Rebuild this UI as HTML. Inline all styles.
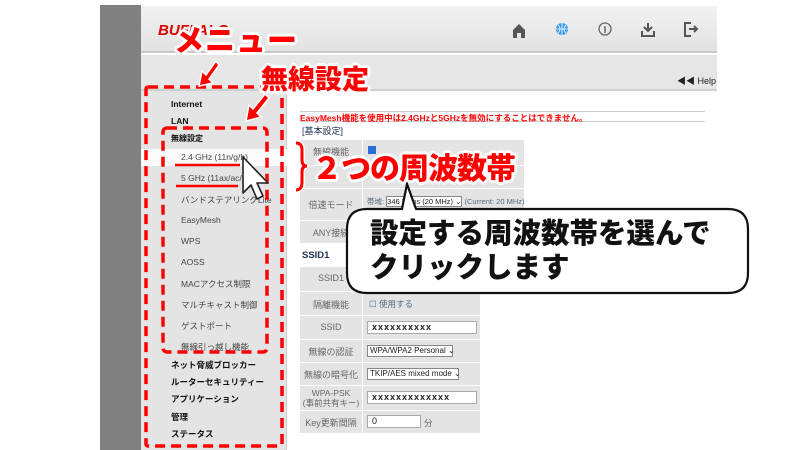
<!DOCTYPE html>
<html><head><meta charset="utf-8">
<style>
*{margin:0;padding:0;box-sizing:border-box}
body{width:800px;height:450px;overflow:hidden;background:#fff;font-family:"Liberation Sans","Noto Sans CJK JP",sans-serif;position:relative}
.a{position:absolute}
.strip{left:100px;top:5px;width:41px;height:445px;background:#808080}
.hdr{left:141px;top:6px;width:576px;height:47px;background:linear-gradient(#f2f2f2,#e2e2e2);border-bottom:2px solid #c8c8c8}
.sub{left:141px;top:55px;width:576px;height:36px;background:#e6e6e6;border-bottom:2px solid #d0d0d0}
.side{left:141px;top:91px;width:146px;height:359px;background:#e4e4e4;border-right:1px solid #ccc}
.side div{position:absolute;font-size:8.5px;color:#333;white-space:nowrap}
.side .b{font-weight:bold;color:#111;left:30px}
.side .s{left:40px;color:#444}
.tb{background:#e4e4e4}
.lab{position:absolute;font-size:9px;color:#666;text-align:center}
.row{position:absolute;left:300px;height:1px;background:#fff}
.ann{font-weight:900;color:#f00;font-family:"Noto Sans CJK JP",sans-serif;text-shadow:0 0 3px #fff,0 0 3px #fff,2px 2px 0 #fff,-2px -2px 0 #fff,2px -2px 0 #fff,-2px 2px 0 #fff,0 3px 0 #fff,0 -3px 0 #fff,3px 0 0 #fff,-3px 0 0 #fff}
.inp{position:absolute;background:#fff;border:1px solid #aaa;font-size:9px;padding-left:4px;letter-spacing:1px;color:#222;font-weight:bold}
.sel{position:absolute;background:#fff;border:1px solid #888;font-size:8px;color:#222;padding-left:2px;white-space:nowrap;line-height:10px}
</style></head><body>
<div class="a strip"></div>
<div class="a hdr"></div>
<div class="a" style="left:158px;top:22px;font-size:15px;font-weight:900;font-style:italic;color:#d00">BUFFALO</div>
<svg class="a" style="left:505px;top:18px" width="220" height="24">
<path d="M8 12 L14 6 L20 12 V20 H16 V15 H12 V20 H8Z" fill="#555"/>
<circle cx="57" cy="11" r="6" fill="#3b9be8"/><path d="M51 11H63M57 5V17M53 7Q57 11 53 15M61 7Q57 11 61 15" stroke="#fff" stroke-width=".8" fill="none"/>
<circle cx="100" cy="11" r="6" fill="none" stroke="#666" stroke-width="1.3"/><path d="M100 8V15" stroke="#666" stroke-width="1.5"/>
<path d="M143 5V12M139 9L143 13L147 9M137 13V18H149V13" stroke="#555" stroke-width="2" fill="none"/>
<path d="M186 5H180V18H186M184 11H192M189 8L192 11L189 14" stroke="#555" stroke-width="2" fill="none"/>
</svg>
<div class="a sub"></div>
<div class="a" style="left:677px;top:74px;font-size:9px;color:#222">◀◀ Help</div>
<div class="a side">
<div class="b" style="top:8px">Internet</div>
<div class="b" style="top:25px">LAN</div>
<div class="b" style="top:42px;font-size:8px">無線設定</div>
<div style="left:0;top:58px;width:146px;height:17px;background:#fafafa"></div>
<div class="s" style="top:61px">2.4 GHz (11n/g/b)</div>
<div class="s" style="top:82px">5 GHz (11ax/ac/n/a)</div>
<div class="s" style="top:103px">バンドステアリングLite</div>
<div class="s" style="top:124px">EasyMesh</div>
<div class="s" style="top:145px">WPS</div>
<div class="s" style="top:166px">AOSS</div>
<div class="s" style="top:187px">MACアクセス制限</div>
<div class="s" style="top:208px">マルチキャスト制御</div>
<div class="s" style="top:229px">ゲストポート</div>
<div class="s" style="top:250px">無線引っ越し機能</div>
<div class="b" style="top:268px">ネット脅威ブロッカー</div>
<div class="b" style="top:285px">ルーターセキュリティー</div>
<div class="b" style="top:302px">アプリケーション</div>
<div class="b" style="top:320px">管理</div>
<div class="b" style="top:337px">ステータス</div>
</div>
<div class="a" style="left:300px;top:111px;width:405px;height:1px;background:#ccc"></div>
<div class="a" style="left:300px;top:121px;width:405px;height:1px;background:#ccc"></div>
<div class="a" style="left:300px;top:112px;font-size:8.5px;color:#f00;font-weight:bold">EasyMesh機能を使用中は2.4GHzと5GHzを無効にすることはできません。</div>
<div class="a" style="left:302px;top:124px;font-size:9px;color:#235">[基本設定]</div>
<div class="a tb" style="left:300px;top:140px;width:224px;height:103px"></div>
<div class="a" style="left:362px;top:140px;width:1px;height:103px;background:#fff"></div>
<div class="lab" style="left:300px;top:145px;width:62px">無線機能</div>
<div class="lab" style="left:300px;top:198px;width:62px">倍速モード</div>
<div class="lab" style="left:300px;top:226px;width:62px">ANY接続</div>
<div class="a" style="left:367px;top:196px;font-size:7.5px;color:#567;white-space:nowrap">帯域: <span style="border:1px solid #888;background:#fff;color:#222">346 Mbps (20 MHz) ⌄</span> (Current: 20 MHz)</div>
<div class="row" style="top:165px;width:224px"></div>
<div class="row" style="top:188px;width:224px"></div>
<div class="row" style="top:220px;width:224px"></div>
<div class="a" style="left:302px;top:250px;font-size:9.5px;color:#235;font-weight:bold">SSID1</div>
<div class="a tb" style="left:300px;top:267px;width:180px;height:166px"></div>
<div class="a" style="left:362px;top:267px;width:1px;height:166px;background:#fff"></div>
<div class="row" style="top:291px;width:180px"></div>
<div class="row" style="top:315px;width:180px"></div>
<div class="row" style="top:339px;width:180px"></div>
<div class="row" style="top:362px;width:180px"></div>
<div class="row" style="top:385px;width:180px"></div>
<div class="row" style="top:410px;width:180px"></div>
<div class="lab" style="left:300px;top:273px;width:62px">SSID1</div>
<div class="lab" style="left:300px;top:298px;width:62px">隔離機能</div>
<div class="lab" style="left:300px;top:322px;width:62px">SSID</div>
<div class="lab" style="left:300px;top:345px;width:62px">無線の認証</div>
<div class="lab" style="left:300px;top:368px;width:62px">無線の暗号化</div>
<div class="lab" style="left:300px;top:388px;width:62px;line-height:10px;font-size:8.5px">WPA-PSK<br>(事前共有キー)</div>
<div class="lab" style="left:300px;top:416px;width:62px">Key更新間隔</div>
<div class="a" style="left:369px;top:298px;font-size:8.5px;color:#567">☐ 使用する</div>
<div class="inp" style="left:367px;top:321px;width:110px;height:13px">xxxxxxxxxx</div>
<div class="sel" style="left:367px;top:345px;width:86px;height:12px">WPA/WPA2 Personal ⌄</div>
<div class="sel" style="left:367px;top:368px;width:92px;height:12px">TKIP/AES mixed mode ⌄</div>
<div class="inp" style="left:367px;top:391px;width:110px;height:13px">xxxxxxxxxxxxx</div>
<div class="inp" style="left:367px;top:415px;width:54px;height:13px;font-weight:normal">0</div>
<div class="a" style="left:424px;top:417px;font-size:8.5px;color:#567">分</div>
<div class="a" style="left:368px;top:146px;width:8px;height:8px;background:#2a6fd6"></div>

<svg class="a" style="left:0;top:0" width="800" height="450">
<g fill="none" stroke="#f00" stroke-width="3.5" stroke-dasharray="10 6">
<rect x="146" y="87" width="136" height="359" rx="2"/>
<rect x="163" y="128" width="104" height="224" rx="4"/>
</g>
<path d="M175 165H240M176 186H238" stroke="#f00" stroke-width="2.5"/>
<g fill="#f00" stroke="#fff" stroke-width="1.5">
<path d="M216 61 L206 75 L202 71 L199 86 L213 83 L209 79 L219 65Z"/>
<path d="M265 94 L253 109 L249 105 L246 121 L261 117 L257 113 L269 98Z"/>
</g>
<path d="M296 143 Q302 143 302 150 V160 Q302 166 307 166 Q302 166 302 172 V182 Q302 190 296 190" fill="none" stroke="#fff" stroke-width="6"/>
<path d="M296 143 Q302 143 302 150 V160 Q302 166 307 166 Q302 166 302 172 V182 Q302 190 296 190" fill="none" stroke="#f00" stroke-width="3"/>
<path d="M243 157 V193 L251 185 L257 199 L263 196 L257 183 L268 183Z" fill="#fff" stroke="#222" stroke-width="1.6" stroke-linejoin="round"/>
<path d="M367 209 H402 L407 184 L416 209 H728 Q748 209 748 229 V273 Q748 293 728 293 H367 Q347 293 347 273 V229 Q347 209 367 209Z" fill="#fff" stroke="#111" stroke-width="2.2"/>
</svg>
<div class="a ann" style="left:174px;top:16px;font-size:30px;letter-spacing:1px">メニュー</div>
<div class="a ann" style="left:261px;top:58px;font-size:27px">無線設定</div>
<div class="a ann" style="left:312px;top:144px;font-size:30px;letter-spacing:-1px">２つの周波数帯</div>
<div class="a" style="left:370px;top:215px;font-size:28.5px;line-height:34px;font-weight:900;color:#111;font-family:'Noto Sans CJK JP',sans-serif;white-space:nowrap">設定する周波数帯を選んで<br>クリックします</div>
</body></html>
